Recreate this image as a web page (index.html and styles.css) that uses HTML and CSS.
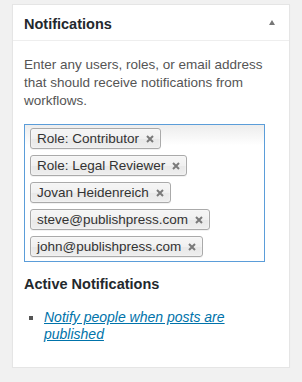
FILE: index.html
```html
<!DOCTYPE html>
<html>
  <head>
    <meta charset="utf-8" />
    <title>Notifications</title>
    <link rel="stylesheet" href="styles.css">
  </head>
<body>

  <div class="postbox">
    <div class="hndle">
      <h2>Notifications</h2>
      <span class="toggle"></span>
    </div>

    <div class="inside">
      <p class="description">
        Enter any users, roles, or email address that should receive notifications from workflows.
      </p>

      <ul class="choices">
        <li class="choice">Role: Contributor<svg class="close" viewBox="0 0 8 8"><path d="M1 1L7 7M7 1L1 7"/></svg></li>
        <li class="choice">Role: Legal Reviewer<svg class="close" viewBox="0 0 8 8"><path d="M1 1L7 7M7 1L1 7"/></svg></li>
        <li class="choice">Jovan Heidenreich<svg class="close" viewBox="0 0 8 8"><path d="M1 1L7 7M7 1L1 7"/></svg></li>
        <li class="choice">steve@publishpress.com<svg class="close" viewBox="0 0 8 8"><path d="M1 1L7 7M7 1L1 7"/></svg></li>
        <li class="choice">john@publishpress.com<svg class="close" viewBox="0 0 8 8"><path d="M1 1L7 7M7 1L1 7"/></svg></li>
      </ul>

      <h3>Active Notifications</h3>

      <ul class="active">
        <li><a href="#">Notify people when posts are published</a></li>
      </ul>
    </div>
  </div>

</body>
</html>
```

FILE: styles.css
```css
body
{
  margin: 0;
  padding: 4px 12px 0 12px;
  background-color: #f1f1f1;
  font-family: 'Liberation Sans', Arial, sans-serif;
  font-size: 13px;
  color: #444;
}

.postbox
{
  background: #fff;
  border: 1px solid #e5e5e5;
  box-shadow: 0 1px 1px rgba(0, 0, 0, 0.04);
  height: 364px;
  box-sizing: border-box;
}

.hndle
{
  display: flex;
  align-items: center;
  justify-content: space-between;
  height: 36px;
  padding: 2px 12px 0 11px;
  box-sizing: border-box;
  border-bottom: 1px solid #eee;
}

.hndle h2
{
  margin: 0;
  font-size: 14.5px;
  font-weight: 600;
  color: #23282d;
}

.toggle
{
  width: 0;
  height: 0;
  border-left: 3px solid transparent;
  border-right: 3px solid transparent;
  border-bottom: 5px solid #777;
  margin-right: 2px;
  margin-top: -3px;
}

.inside
{
  padding: 15px 12px 12px 11px;
}

.description
{
  margin: 0;
  line-height: 18px;
  font-size: 13.5px;
  color: #555;
}

.choices
{
  list-style: none;
  margin: 14px 0 0 0;
  padding: 3px 5px 4px 5px;
  width: 241px;
  box-sizing: border-box;
  border: 1px solid #5b9dd9;
  background-image: linear-gradient(#eee 1%, #fff 15%);
  display: flex;
  flex-direction: column;
  align-items: flex-start;
  gap: 6px;
}

.choice
{
  display: flex;
  align-items: center;
  height: 21px;
  box-sizing: border-box;
  padding: 0 6px;
  border: 1px solid #aaa;
  border-radius: 3px;
  background-image: linear-gradient(#f4f4f4 20%, #f0f0f0 50%, #e8e8e8 52%, #eee 100%);
  box-shadow: 0 0 2px #fff inset, 0 1px 0 rgba(0, 0, 0, 0.05);
  color: #333;
  font-size: 13.5px;
  white-space: pre;
}

.close
{
  width: 8px;
  height: 8px;
  margin-left: 7px;
  stroke: #7a7a7a;
  stroke-width: 2;
}

h3
{
  margin: 14px 0 0 0;
  font-size: 14.5px;
  font-weight: 600;
  color: #23282d;
}

.active
{
  list-style: square;
  margin: 17px 0 0 0;
  padding-left: 20px;
  line-height: 17px;
  color: #555;
}

.active a
{
  color: #0073aa;
  font-style: italic;
  font-size: 14px;
}
```
